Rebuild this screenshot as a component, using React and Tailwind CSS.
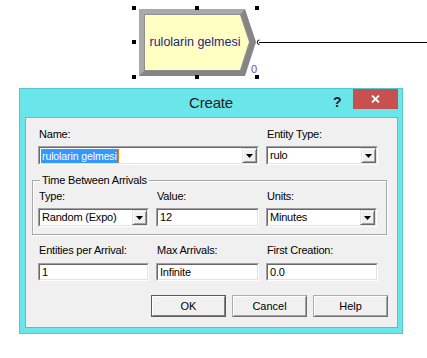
import React from "react";

const font = "font-['Liberation_Sans',Arial,sans-serif]";

const Sunken = ({ className = "", children }) => (
  <div className={`border border-t-[#a0a0a0] border-l-[#a0a0a0] border-b-white border-r-white ${className}`}>
    <div className="h-full border border-t-[#696969] border-l-[#696969] border-b-[#e3e3e3] border-r-[#e3e3e3] bg-white flex items-center">
      {children}
    </div>
  </div>
);

const Arrow = () => (
  <div className="w-[15px] h-full border border-t-[#e3e3e3] border-l-[#e3e3e3] border-b-[#696969] border-r-[#696969] bg-[#f0f0f0] flex items-center justify-center shadow-[inset_1px_1px_0_#fff,inset_-1px_-1px_0_#a0a0a0]">
    <svg width="7" height="4" viewBox="0 0 7 4">
      <polygon points="0,0 7,0 3.5,4" fill="#000" />
    </svg>
  </div>
);

const TextBox = ({ w, h = "h-[18px]", value }) => (
  <Sunken className={`${w} ${h}`}>
    <span className="pl-[2px] text-[11px] tracking-[-0.2px] leading-none text-black">{value}</span>
  </Sunken>
);

const Combo = ({ w, value, selected }) => (
  <Sunken className={`${w} h-[19px]`}>
    <div className="flex-1 flex items-center pl-[1px] h-full">
      {selected ? (
        <span className="flex items-center h-[14px]">
          <span className="bg-[#3399ff] text-white text-[10.5px] tracking-[-0.1px] leading-[14px] px-[1px]">{value}</span>
          <span className="w-[1px] h-[14px] bg-[#e07a10]" />
        </span>
      ) : (
        <span className="pl-[1px] text-[11px] tracking-[-0.2px] leading-none text-black">{value}</span>
      )}
    </div>
    <Arrow />
  </Sunken>
);

const Label = ({ children }) => (
  <div className="h-[13px] leading-[13px] text-[11px] tracking-[-0.2px] text-black pl-[1px] whitespace-nowrap">{children}</div>
);

const Button = ({ children, def }) => (
  <div className={`w-[75px] h-[22px] border ${def ? "border-[#5a5a5a]" : "border-[#adadad] border-b-[#707070] border-r-[#707070]"}`}>
    <div className={`h-full flex items-center justify-center bg-[#f0f0f0] text-[11px] text-black ${def ? "border border-t-white border-l-white border-b-[#808080] border-r-[#808080]" : "shadow-[inset_1px_1px_0_#fff,inset_-1px_-1px_0_#a0a0a0]"}`}>
      {children}
    </div>
  </div>
);

const Handle = ({ x, y }) => <rect x={x} y={y} width="4" height="4" fill="#000" />;

export default function App() {
  return (
    <div className={`relative w-[427px] h-[358px] bg-white overflow-hidden ${font}`}>
      <svg className="absolute left-0 top-0" width="427" height="90" viewBox="0 0 427 90">
        <polygon points="139,9 245,9 256,42 245,76 139,76" fill="#858585" />
        <polygon points="139,9 245,9 241,14 144,14 144,71 139,76" fill="#a9a9a9" />
        <polygon points="144,14 241,14 250.5,42 241,71 144,71" fill="#8e8e8e" />
        <polygon points="145,15 240,15 249,42 240,70 145,70" fill="#ffffc4" />
        <Handle x={132} y={6} />
        <Handle x={195} y={6} />
        <Handle x={255} y={6} />
        <Handle x={132} y={40} />
        <Handle x={132} y={75} />
        <Handle x={195} y={75} />
        <Handle x={255} y={75} />
        <path d="M259.5,40 A2,2 0 1 0 259.5,44.5" fill="none" stroke="#000" strokeWidth="1" />
        <line x1="259" y1="42.5" x2="427" y2="42.5" stroke="#000" strokeWidth="1" />
      </svg>
      <div className="absolute left-[145px] top-[15px] w-[100px] h-[55px] flex items-center justify-center text-[12.5px] text-[#24248a] whitespace-nowrap">
        rulolarin gelmesi
      </div>
      <div className="absolute left-[251px] top-[63px] text-[11px] leading-[13px] text-[#7a3ec8]">0</div>

      <div className="absolute left-[19px] top-[88px] w-[384px] h-[246px] bg-[#6ae5ea] border border-[#56c7cc] flex flex-col">
        <div className="relative h-[28px] flex items-center justify-center">
          <span className="text-[15px] text-[#1e1e1e] tracking-[-0.2px] mt-[1px]">Create</span>
          <span className="absolute left-[313px] top-[3px] text-[14px] font-bold text-[#222]">?</span>
          <div className="absolute right-[4px] top-0 w-[45px] h-[20px] bg-[#c75050] flex items-center justify-center">
            <svg width="9" height="8" viewBox="0 0 9 8">
              <path d="M1,0.5 L8,7.5 M8,0.5 L1,7.5" stroke="#fff" strokeWidth="1.8" />
            </svg>
          </div>
        </div>
        <div className="ml-[5px] w-[373px] h-[211px] border border-[#55c2c7] bg-[#f0f0f0] pt-[10px]">
          <div className="flex gap-[7px] pl-[12px]">
            <div className="w-[221px]">
              <Label>Name:</Label>
              <div className="mt-[5px]">
                <Combo w="w-[221px]" value="rulolarin gelmesi" selected />
              </div>
            </div>
            <div className="w-[112px]">
              <Label>Entity Type:</Label>
              <div className="mt-[5px]">
                <Combo w="w-[112px]" value="rulo" />
              </div>
            </div>
          </div>

          <div className="relative ml-[6px] mt-[15px] w-[355px] h-[55px] border border-[#a8a8a8] shadow-[1px_1px_0_#fff,inset_1px_1px_0_#fff] pt-[9px] pl-[5px]">
            <span className="absolute left-[7px] -top-[7px] px-[2px] bg-[#f0f0f0] text-[11px] tracking-[-0.2px] leading-[13px] text-black">
              Time Between Arrivals
            </span>
            <div className="flex gap-[7px]">
              <div className="w-[111px]">
                <Label>Type:</Label>
                <div className="mt-[5px]">
                  <Combo w="w-[111px]" value="Random (Expo)" />
                </div>
              </div>
              <div className="w-[103px]">
                <Label>Value:</Label>
                <div className="mt-[5px]">
                  <TextBox w="w-[103px]" h="h-[19px]" value="12" />
                </div>
              </div>
              <div className="w-[111px]">
                <Label>Units:</Label>
                <div className="mt-[5px]">
                  <Combo w="w-[111px]" value="Minutes" />
                </div>
              </div>
            </div>
          </div>

          <div className="flex gap-[7px] pl-[12px] mt-[9px]">
            <div className="w-[111px]">
              <Label>Entities per Arrival:</Label>
              <div className="mt-[6px]">
                <TextBox w="w-[111px]" value="1" />
              </div>
            </div>
            <div className="w-[103px]">
              <Label>Max Arrivals:</Label>
              <div className="mt-[6px]">
                <TextBox w="w-[103px]" value="Infinite" />
              </div>
            </div>
            <div className="w-[112px]">
              <Label>First Creation:</Label>
              <div className="mt-[6px]">
                <TextBox w="w-[112px]" value="0.0" />
              </div>
            </div>
          </div>

          <div className="flex justify-end gap-[6px] pr-[9px] mt-[14px]">
            <Button def>OK</Button>
            <Button>Cancel</Button>
            <Button>Help</Button>
          </div>
        </div>
      </div>
    </div>
  );
}
